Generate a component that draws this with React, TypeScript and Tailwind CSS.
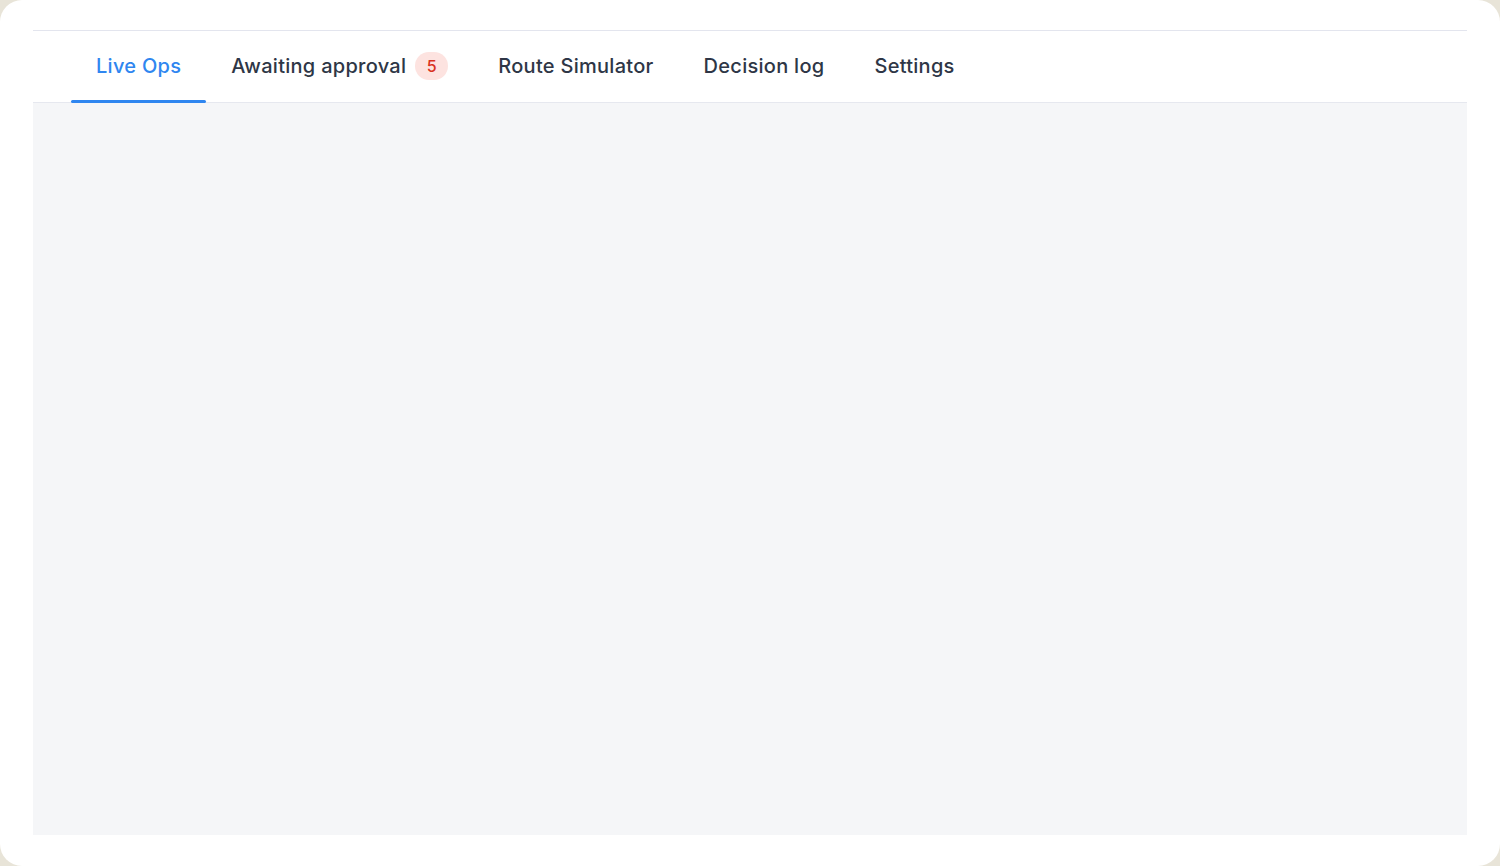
import React from 'react';

const tabs = [
  { label: 'Live Ops', active: true },
  { label: 'Awaiting approval', badge: 5 },
  { label: 'Route Simulator' },
  { label: 'Decision log' },
  { label: 'Settings' },
];

function TabBar() {
  return (
    <nav className="flex h-[72px] items-stretch border-b border-[#e6e8ef] bg-white pl-[38px]">
      {tabs.map((tab) => (
        <button
          key={tab.label}
          className={
            'relative flex items-center gap-[9px] px-[25px] pb-[2px] text-[20px] font-medium tracking-[0.28px] ' +
            (tab.active ? 'text-[#2f86f0]' : 'text-[#2e3646]')
          }
        >
          <span>{tab.label}</span>
          {tab.badge !== undefined && (
            <span className="flex h-[28px] w-[33px] items-center justify-center rounded-full bg-[#fde3e0] text-[16px] font-medium tracking-normal text-[#d9321f]">
              {tab.badge}
            </span>
          )}
          {tab.active && (
            <span className="absolute bottom-[-1px] left-0 right-0 h-[3px] rounded-full bg-[#2f86f0]" />
          )}
        </button>
      ))}
    </nav>
  );
}

export default function App() {
  return (
    <div
      className="h-[866px] w-[1500px] overflow-hidden bg-[#e8e4d8]"
      style={{ fontFamily: 'Inter, "Noto Sans", sans-serif' }}
    >
      <div className="flex h-full flex-col rounded-[22px] bg-white px-[33px] pb-[31px] pt-[30px]">
        <div className="flex flex-1 flex-col border-t border-[#e3e5ee]">
          <TabBar />
          <main className="flex-1 bg-[#f5f6f8]" />
        </div>
      </div>
    </div>
  );
}
